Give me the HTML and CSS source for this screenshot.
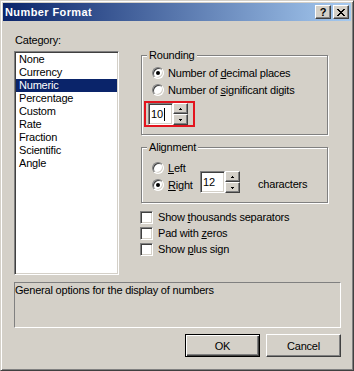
FILE: index.html
```html
<!DOCTYPE html>
<html lang="en">
<head>
    <meta charset="UTF-8">
    <meta name="viewport" content="width=device-width, initial-scale=1.0">
    <title>Number Format</title>
    <link rel="stylesheet" href="styles.css">
</head>
<body>
    <div class="window">
        <div class="titlebar">
            <span class="title">Number Format</span>
            <div class="title-btns">
                <button class="tbtn">?</button>
                <button class="tbtn">
                    <svg width="8" height="7" viewBox="0 0 8 7" shape-rendering="crispEdges"><path d="M0 0h2v1H0zM6 0h2v1H6zM1 1h2v1H1zM5 1h2v1H5zM2 2h4v1H2zM3 3h2v1H3zM2 4h4v1H2zM1 5h2v1H1zM5 5h2v1H5zM0 6h2v1H0zM6 6h2v1H6z"/></svg>
                </button>
            </div>
        </div>

        <div class="content">
            <div class="main">
                <div class="col-left">
                    <div class="label">Category:</div>
                    <ul class="listbox">
                        <li>None</li>
                        <li>Currency</li>
                        <li class="sel">Numeric</li>
                        <li>Percentage</li>
                        <li>Custom</li>
                        <li>Rate</li>
                        <li>Fraction</li>
                        <li>Scientific</li>
                        <li>Angle</li>
                    </ul>
                </div>

                <div class="col-right">
                    <!-- Rounding -->
                    <div class="group rounding">
                        <span class="group-title">Rounding</span>
                        <div class="radio-row first"><span class="radio on"></span><span>Number of <u>d</u>ecimal places</span></div>
                        <div class="radio-row"><span class="radio"></span><span>Number of <u>s</u>ignificant digits</span></div>
                        <div class="mark">
                            <div class="spin">
                                <div class="spin-edit">10<span class="caret"></span></div>
                                <div class="spin-btns">
                                    <span class="spin-btn"><svg width="3" height="2" viewBox="0 0 3 2" shape-rendering="crispEdges"><path d="M1 0h1v1h1v1H0V1h1z"/></svg></span>
                                    <span class="spin-btn"><svg width="3" height="2" viewBox="0 0 3 2" shape-rendering="crispEdges"><path d="M0 0h3v1H2v1H1V1H0z"/></svg></span>
                                </div>
                            </div>
                        </div>
                    </div>

                    <!-- Alignment -->
                    <div class="group alignment">
                        <span class="group-title">Alignment</span>
                        <div class="align-grid">
                            <div class="radio-row left"><span class="radio"></span><span><u>L</u>eft</span></div>
                            <div class="radio-row right"><span class="radio on"></span><span><u>R</u>ight</span></div>
                            <div class="spin chars-spin">
                                <div class="spin-edit">12</div>
                                <div class="spin-btns">
                                    <span class="spin-btn"><svg width="3" height="2" viewBox="0 0 3 2" shape-rendering="crispEdges"><path d="M1 0h1v1h1v1H0V1h1z"/></svg></span>
                                    <span class="spin-btn"><svg width="3" height="2" viewBox="0 0 3 2" shape-rendering="crispEdges"><path d="M0 0h3v1H2v1H1V1H0z"/></svg></span>
                                </div>
                            </div>
                            <span class="chars">characters</span>
                        </div>
                    </div>

                    <div class="checks">
                        <div class="check-row"><span class="checkbox"></span><span>Show <u>t</u>housands separators</span></div>
                        <div class="check-row"><span class="checkbox"></span><span>Pad with <u>z</u>eros</span></div>
                        <div class="check-row"><span class="checkbox"></span><span>Show <u>p</u>lus sign</span></div>
                    </div>
                </div>
            </div>

            <div class="desc">General options for the display of numbers</div>

            <div class="buttons">
                <button class="btn default">OK</button>
                <button class="btn">Cancel</button>
            </div>
        </div>
    </div>
</body>
</html>
```

FILE: styles.css
```css
* {
    box-sizing: border-box;
}

body {
    margin: 0;
    background-color: #d4d0c8;
    font-family: "Liberation Sans", Arial, sans-serif;
    font-size: 11px;
    letter-spacing: -0.2px;
    color: #000;
}

u {
    text-decoration: underline;
}

.window {
    width: 354px;
    height: 371px;
    display: flex;
    flex-direction: column;
    padding: 2px;
    border: 1px solid;
    border-color: #d4d0c8 #404040 #404040 #d4d0c8;
    box-shadow: inset 1px 1px #fff, inset -1px -1px #808080;
    background-color: #d4d0c8;
}

/* title bar */
.titlebar {
    height: 18px;
    display: flex;
    align-items: center;
    justify-content: space-between;
    padding: 0 2px;
    background: linear-gradient(to right, #0a246a, #a6caf0);
}

.title {
    color: #fff;
    font-weight: bold;
    letter-spacing: 0.4px;
}

.title-btns {
    display: flex;
    gap: 2px;
}

.tbtn {
    width: 16px;
    height: 14px;
    padding: 0;
    display: flex;
    align-items: center;
    justify-content: center;
    border: 1px solid;
    border-color: #fff #404040 #404040 #fff;
    box-shadow: inset -1px -1px #808080, inset 1px 1px #d4d0c8;
    background-color: #d4d0c8;
    font-family: "Liberation Sans", Arial, sans-serif;
    font-size: 11px;
    font-weight: bold;
    line-height: 12px;
    color: #000;
}

/* body */
.content {
    flex: 1;
    display: flex;
    flex-direction: column;
    padding: 13px 10px 0 11px;
}

.main {
    display: flex;
    gap: 21px;
}

.col-left {
    width: 105px;
}

.label {
    line-height: 13px;
    padding-left: 1px;
}

.listbox {
    margin: 4px 0 0;
    padding: 1px;
    list-style: none;
    height: 224px;
    background-color: #fff;
    border: 1px solid;
    border-color: #808080 #fff #fff #808080;
    box-shadow: inset 1px 1px #404040, inset -1px -1px #d4d0c8;
}

.listbox li {
    height: 13px;
    line-height: 13px;
    padding-left: 3px;
}

.listbox li.sel {
    background-color: #0a246a;
    color: #fff;
}

.col-right {
    width: 188px;
    padding-top: 21px;
}

.group {
    margin-left: 1px;
    display: flex;
    flex-direction: column;
    align-items: flex-start;
    border: 1px solid #808080;
    box-shadow: inset 1px 1px #fff, 1px 1px #fff;
}

.group-title {
    margin: -7px 0 0 5px;
    padding: 0 2px;
    line-height: 13px;
    background-color: #d4d0c8;
}

.rounding {
    padding-bottom: 7px;
}

.radio-row {
    height: 17px;
    display: flex;
    align-items: center;
    gap: 4px;
    margin-left: 10px;
}

.rounding .first {
    margin-top: 2px;
}

.radio {
    flex: none;
    width: 12px;
    height: 12px;
    display: flex;
    align-items: center;
    justify-content: center;
    border-radius: 50%;
    border: 1px solid;
    border-color: #808080 #fff #fff #808080;
    box-shadow: inset 1px 1px #404040, inset -1px -1px #d4d0c8;
    background-color: #fff;
}

.radio.on::after {
    content: "";
    width: 4px;
    height: 4px;
    border-radius: 50%;
    background-color: #000;
}

.mark {
    margin: 3px 0 0 2px;
    padding: 0 5px 0 2px;
    border: 2px solid #e3141e;
}

.spin {
    display: flex;
    height: 22px;
}

.spin-edit {
    width: 25px;
    display: flex;
    align-items: center;
    padding-left: 2px;
    background-color: #fff;
    border: 1px solid;
    border-color: #808080 #fff #fff #808080;
    box-shadow: inset 1px 1px #404040, inset -1px -1px #d4d0c8;
}

.caret {
    display: inline-block;
    width: 1px;
    height: 13px;
    margin-left: 1px;
    background-color: #000;
}

.spin-btns {
    width: 15px;
    display: flex;
    flex-direction: column;
}

.spin-btn {
    height: 11px;
    display: flex;
    align-items: center;
    justify-content: center;
    border: 1px solid;
    border-color: #fff #404040 #404040 #fff;
    box-shadow: inset -1px -1px #808080, inset 1px 1px #d4d0c8;
    background-color: #d4d0c8;
}

.alignment {
    margin-top: 12px;
    padding-bottom: 9px;
}

.align-grid {
    margin: 5px 0 0 10px;
    display: grid;
    grid-template-columns: 48px 40px auto;
    grid-template-rows: 17px 17px;
}

.align-grid .radio-row {
    margin-left: 0;
}

.align-grid .left {
    grid-column: 1;
    grid-row: 1;
}

.align-grid .right {
    grid-column: 1;
    grid-row: 2;
}

.chars-spin {
    grid-column: 2;
    grid-row: 1 / 3;
    align-self: end;
}

.chars {
    grid-column: 3;
    grid-row: 2;
    margin-left: 18px;
    line-height: 17px;
}

.checks {
    margin-top: 6px;
}

.check-row {
    height: 16px;
    display: flex;
    align-items: center;
    gap: 5px;
}

.checkbox {
    flex: none;
    width: 13px;
    height: 13px;
    background-color: #fff;
    border: 1px solid;
    border-color: #808080 #fff #fff #808080;
    box-shadow: inset 1px 1px #404040, inset -1px -1px #d4d0c8;
}

.desc {
    margin-top: 7px;
    height: 46px;
    padding-top: 1px;
    line-height: 13px;
    border: 1px solid;
    border-color: #808080 #fff #fff #808080;
}

.buttons {
    margin-top: 6px;
    display: flex;
    justify-content: flex-end;
    gap: 6px;
}

.btn {
    width: 75px;
    height: 23px;
    padding: 0;
    border: 1px solid;
    border-color: #fff #404040 #404040 #fff;
    box-shadow: inset -1px -1px #808080, inset 1px 1px #d4d0c8;
    background-color: #d4d0c8;
    font-family: inherit;
    font-size: 11px;
    letter-spacing: inherit;
    color: #000;
}

.btn.default {
    border-color: #000;
    box-shadow: inset 1px 1px #fff, inset -1px -1px #404040, inset -2px -2px #808080;
}
```
